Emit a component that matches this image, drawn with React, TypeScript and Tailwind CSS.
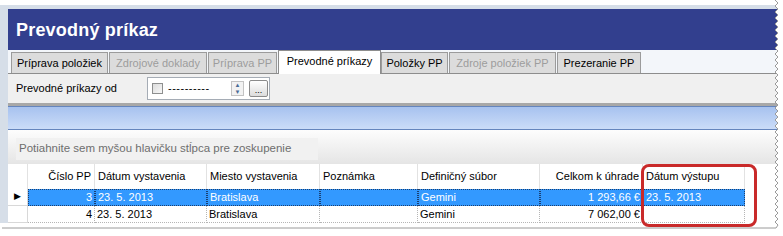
import React from "react";

const tabs = [
  { label: "Príprava položiek", cls: "w-[97px]", state: "normal" },
  { label: "Zdrojové doklady", cls: "w-[98px]", state: "disabled" },
  { label: "Príprava PP", cls: "w-[69px]", state: "disabled" },
  { label: "Prevodné príkazy", cls: "w-[103px]", state: "active" },
  { label: "Položky PP", cls: "w-[67px]", state: "normal" },
  { label: "Zdroje položiek PP", cls: "w-[107px]", state: "disabled" },
  { label: "Prezeranie PP", cls: "w-[84px]", state: "normal" },
];

const columns = [
  { label: "Číslo PP", cls: "w-[67px] justify-end text-right", key: "cislo" },
  { label: "Dátum vystavenia", cls: "w-[112px]", key: "datum" },
  { label: "Miesto vystavenia", cls: "w-[113px]", key: "miesto" },
  { label: "Poznámka", cls: "w-[98px]", key: "pozn" },
  { label: "Definičný súbor", cls: "w-[122px]", key: "subor" },
  { label: "Celkom k úhrade", cls: "w-[103px] justify-end text-right", key: "celkom" },
  { label: "Dátum výstupu", cls: "w-[102px]", key: "vystup" },
];

const rows: Record<string, string>[] = [
  { cislo: "3", datum: "23. 5. 2013", miesto: "Bratislava", pozn: "", subor: "Gemini", celkom: "1 293,66 €", vystup: "23. 5. 2013" },
  { cislo: "4", datum: "23. 5. 2013", miesto: "Bratislava", pozn: "", subor: "Gemini", celkom: "7 062,00 €", vystup: "" },
];

// torn paper edge along right and bottom
function TornEdge() {
  const pts: string[] = [];
  for (let y = 0; y <= 225; y += 3) pts.push(`${y % 6 === 0 ? 775 : 778},${y}`);
  for (let x = 776; x >= 0; x -= 3) pts.push(`${x},${x % 6 === 0 ? 225 : 228}`);
  const line = pts.join(" ");
  return (
    <svg className="absolute left-0 top-0 pointer-events-none" width="783" height="236">
      <polygon points={`783,0 ${line} 0,236 783,236`} fill="#ffffff" />
      <polyline points={line} fill="none" stroke="#9a9a9a" strokeWidth="1" />
    </svg>
  );
}

export default function App() {
  return (
    <div className="relative w-[783px] h-[236px] overflow-hidden bg-white font-['Liberation_Sans',Arial,sans-serif] text-[11px] text-black">
      <div className="pt-[5px]">
        <div className="w-[778px] border-t-[4px] border-l-[8px] border-[#d6dee8] flex flex-col">
          {/* header */}
          <div className="h-[41px] bg-[#323f8e] flex items-center pl-[8px] pt-[2px]">
            <span className="text-white font-bold text-[18px] tracking-[0.2px]">Prevodný príkaz</span>
          </div>

          {/* tabs */}
          <div className="h-[24px] bg-[#f3f6fa] flex items-end pl-[3px] border-b border-[#8d8d8d]">
            {tabs.map((t) =>
              t.state === "active" ? (
                <div key={t.label} className={`${t.cls} h-[24px] -mb-px bg-white border border-b-0 border-[#8d8d8d] flex items-center justify-center pb-[2px]`}>
                  {t.label}
                </div>
              ) : (
                <div
                  key={t.label}
                  className={`${t.cls} h-[21px] bg-[#dcdcdc] border border-b-0 border-[#9b9b9b] flex items-center justify-center mr-px ${
                    t.state === "disabled" ? "text-[#9d9d9d]" : "text-black"
                  }`}
                >
                  {t.label}
                </div>
              )
            )}
          </div>

          {/* filter */}
          <div className="h-[29px] bg-[#f0f0f0] flex items-center pl-[8px]">
            <span className="w-[131px]">Prevodné príkazy od</span>
            <div className="w-[123px] h-[23px] bg-white border border-[#a5acb5] flex items-center pl-[4px]">
              <div className="w-[11px] h-[11px] border border-[#8e8f8f] bg-gradient-to-br from-[#dcdcdc] to-[#f8f8f8]" />
              <span className="ml-[5px] w-[63px] tracking-[0.5px]">----------</span>
              <div className="w-[13px] h-[15px] flex flex-col items-center justify-center border border-[#c3c3c3] bg-[#f2f2f2] text-[6px] leading-[7px] text-[#4a6a96]">
                <span>▲</span>
                <span>▼</span>
              </div>
              <div className="ml-[5px] w-[19px] h-[17px] border border-[#8b8b8b] rounded-[2px] bg-gradient-to-b from-white to-[#dcdcdc] flex items-end justify-center text-[9px] leading-[11px]">
                ...
              </div>
            </div>
          </div>

          {/* separator */}
          <div className="h-[3px] bg-[#a8a8a8]" />

          {/* blue bar */}
          <div className="h-[24px] border-y border-[#6585bd] bg-gradient-to-b from-[#a7c2ef] to-[#cbdcf8]" />

          {/* group by area */}
          <div className="h-[34px] bg-gradient-to-b from-[#fdfdfd] to-[#e5e5e5] pt-[8px] pl-[8px]">
            <div className="w-[302px] h-[22px] bg-[#f1f1f1] flex items-center pl-[3px] text-[#6e6e6e] text-[11.5px]">
              Potiahnite sem myšou hlavičku stĺpca pre zoskupenie
            </div>
          </div>

          {/* grid */}
          <div className="bg-white">
            <div className="flex h-[25px]">
              <div className="w-[20px] border-r border-[#e2e2e2]" />
              {columns.map((c) => (
                <div key={c.key} className={`${c.cls} flex items-center px-[3px] border-r border-[#e2e2e2]`}>
                  {c.label}
                </div>
              ))}
            </div>
            {rows.map((r, i) => {
              const sel = i === 0;
              return (
                <div key={i} className="flex h-[17px]">
                  <div className="w-[20px] border-r border-b border-[#d8d8d8] flex items-center pl-[6px] text-[9px]">
                    {sel ? "▶" : ""}
                  </div>
                  {columns.map((c) => (
                    <div
                      key={c.key}
                      className={`${c.cls} flex items-center px-[2px] whitespace-nowrap overflow-hidden border-dotted ${
                        sel ? "bg-[#3399ff] text-white border border-[#1b3f70]" : "border-r border-b border-[#b5b5b5]"
                      }`}
                    >
                      {r[c.key]}
                    </div>
                  ))}
                </div>
              );
            })}
          </div>
        </div>
      </div>

      <TornEdge />

      {/* highlight */}
      <div className="absolute left-[641px] top-[164px] w-[116px] h-[63px] border-[3px] border-[#c92a2a] rounded-[8px]" />
    </div>
  );
}
